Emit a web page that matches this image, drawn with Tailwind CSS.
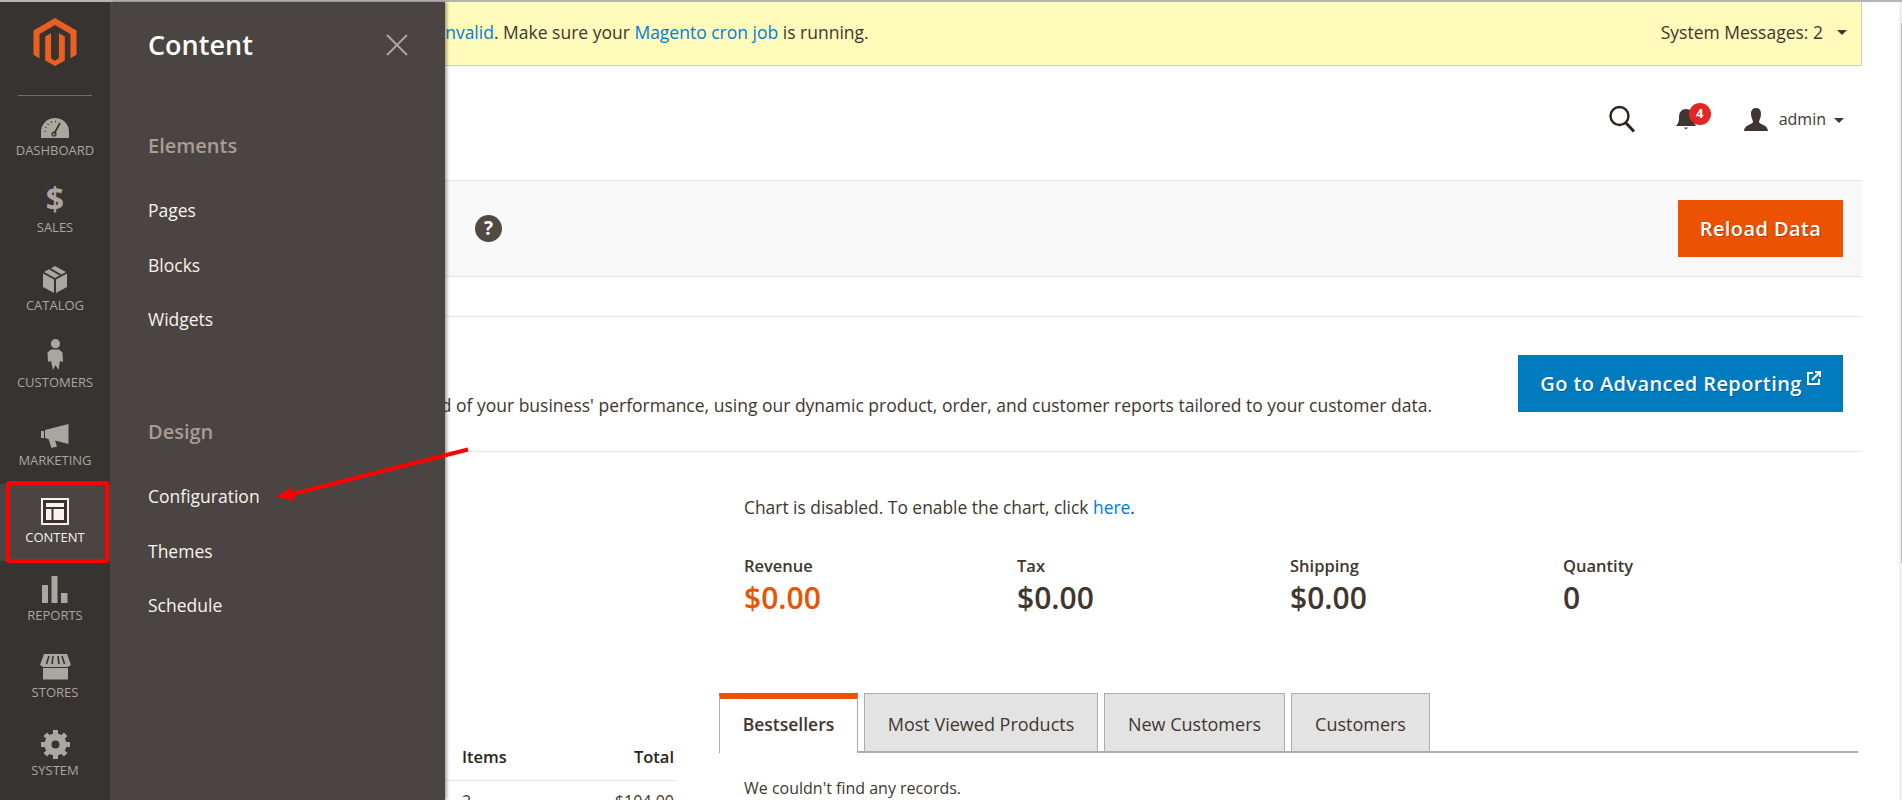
<!DOCTYPE html>
<html lang="en">
<head>
    <meta charset="UTF-8">
    <title>Dashboard / Magento Admin</title>
    <script src="https://cdn.jsdelivr.net/npm/@tailwindcss/browser@4"></script>
</head>
<body class="relative h-screen overflow-hidden bg-white font-['Open_Sans',sans-serif] text-[17.5px] text-[#41362f]">
    <div class="flex h-full border-t-2 border-[#b5b5b5]">

        <!-- icon rail -->
        <nav class="relative z-20 flex h-full w-[110px] shrink-0 flex-col items-center bg-[#373330] text-[13px] uppercase leading-[18px] text-[#aaa6a0]">
            <div class="flex h-[94px] w-full shrink-0 flex-col items-center">
                <svg class="mt-[16px]" width="44" height="49" viewBox="0 0 44 49" fill="#eb5f20">
                    <path d="M22 0 44 12.7V37.4L37.8 41V16.3L22 7.2 6.2 16.3V41L0 37.4V12.7Z"/>
                    <path d="M12 19 18 15.5V41L22 43.5 26 41V15.5L32 19V43.4L22 49 12 43.4Z"/>
                </svg>
                <div class="mt-[29px] h-px w-[74px] bg-[#736d68]"></div>
            </div>
            <a class="flex h-[77.5px] w-full shrink-0 flex-col items-center justify-end pb-[15px]">
                <svg width="28" height="20" viewBox="0 0 28 20"><path fill="#aaa6a0" d="M0 20V14A14 14 0 0 1 28 14V20Z"/><path stroke="#373330" stroke-width="1.6" d="M13 16 19 5"/><circle cx="13" cy="16" r="2" fill="none" stroke="#373330" stroke-width="1.2"/><path stroke="#373330" stroke-width="1.4" stroke-dasharray="1 3" fill="none" d="M4 14A10 10 0 0 1 17 4"/></svg>
                <span class="mt-[3px]">Dashboard</span>
            </a>
            <a class="flex h-[77.5px] w-full shrink-0 flex-col items-center justify-end pb-[15px]">
                <span class="text-[32px] font-bold leading-[38px]">$</span>
                <span>Sales</span>
            </a>
            <a class="flex h-[77.5px] w-full shrink-0 flex-col items-center justify-end pb-[15px]">
                <svg width="24" height="27" viewBox="0 0 24 27" fill="#aaa6a0"><path d="M0 7.5 11 13.5V27L0 21Z"/><path d="M24 7.5 13 13.5V27L24 21Z"/><path d="M12 0 23 6 12 12 1 6Z"/><path stroke="#373330" stroke-width="2" d="M6.5 2.5 17.5 9"/></svg>
                <span class="mt-[3px]">Catalog</span>
            </a>
            <a class="flex h-[77.5px] w-full shrink-0 flex-col items-center justify-end pb-[15px]">
                <svg width="16" height="31" viewBox="0 0 16 31" fill="#aaa6a0"><circle cx="8.5" cy="4.7" r="4.6"/><path d="M4 10.5H12L15.5 13.5 16 23 13 22 11.5 31 8.5 26 6 31 4 22 1 23 .5 13.5Z"/></svg>
                <span class="mt-[3px]">Customers</span>
            </a>
            <a class="flex h-[77.5px] w-full shrink-0 flex-col items-center justify-end pb-[15px]">
                <svg width="28" height="24" viewBox="0 0 28 24" fill="#aaa6a0"><path d="M0 7H3V14H0Z"/><path d="M4 6 27.5 0V20L14 16.5 16 22.5 10.5 24 7.5 15 4 14Z"/></svg>
                <span class="mt-[3px]">Marketing</span>
            </a>
            <a class="flex h-[77.5px] w-full shrink-0 flex-col items-center justify-end bg-[#4a4542] pb-[15px] text-[#f7f3eb]">
                <svg width="28" height="27" viewBox="0 0 28 27"><rect x="1" y="1" width="26" height="25" fill="#373330" stroke="#f7f3eb" stroke-width="2"/><path fill="#f7f3eb" d="M5 5H23V9H5ZM5 11H10.5V22H5ZM12.5 11H23V22H12.5Z"/></svg>
                <span class="mt-[3px]">Content</span>
            </a>
            <a class="flex h-[77.5px] w-full shrink-0 flex-col items-center justify-end pb-[15px]">
                <svg width="26" height="27" viewBox="0 0 26 27" fill="#aaa6a0"><path d="M0 9H6V27H0ZM9.500 0H15.500V27H9.500ZM19 17H25.500V27H19Z"/></svg>
                <span class="mt-[3px]">Reports</span>
            </a>
            <a class="flex h-[77.5px] w-full shrink-0 flex-col items-center justify-end pb-[15px]">
                <svg width="31" height="26" viewBox="0 0 31 26" fill="#aaa6a0"><path d="M4 0H27L31 11 28 13H3L0 11Z"/><path stroke="#373330" stroke-width="1.6" d="M9 2 6.500 10M13 2 12 10M18 2 19 10M22 2 24.500 10"/><path d="M3 14H28V25.500H3Z"/></svg>
                <span class="mt-[3px]">Stores</span>
            </a>
            <a class="flex h-[77.5px] w-full shrink-0 flex-col items-center justify-end pb-[15px]">
                <svg width="29" height="29" viewBox="0 0 29 29"><circle cx="14.500" cy="14.500" r="7.500" fill="none" stroke="#aaa6a0" stroke-width="7"/><path stroke="#aaa6a0" stroke-width="5" d="M14.500 0V5M14.500 24V29M0 14.500H5M24 14.500H29M4.300 4.300 7.800 7.800M21.200 21.200 24.700 24.700M4.300 24.700 7.800 21.200M21.200 7.800 24.700 4.300"/></svg>
                <span class="mt-[2px]">System</span>
            </a>
        </nav>

        <!-- page -->
        <main class="flex w-[1752px] shrink-0 flex-col">
            <div class="flex h-[64px] shrink-0 items-center border-b border-r border-[#cccccc] bg-[#fffbbb] pb-[2px] pr-[14px]">
                <p class="flex-1 whitespace-nowrap pr-[792px] text-right"><a class="text-[#007bdb]">indexers are invalid</a>. Make sure your <a class="text-[#007bdb]">Magento cron job</a> is running.</p>
                <span>System Messages: 2</span>
                <span class="ml-[14px] h-0 w-0 border-x-[5px] border-t-[5px] border-x-transparent border-t-[#41362f]"></span>
            </div>

            <header class="flex h-[114px] shrink-0 items-center justify-end pb-[8px] pr-[18px]">
                <svg width="28" height="28" viewBox="0 0 28 28" fill="none" stroke="#2c2420" stroke-width="2.400"><circle cx="11.500" cy="11" r="9"/><path stroke-width="3" d="M18 18 26 26.500"/></svg>
                <div class="relative ml-[40px] h-[22px] w-[22px]">
                    <svg width="22" height="22" viewBox="0 0 22 22" fill="#41362f"><path d="M0 18C3 15 3 12 3 9 3 4 6 1 10 1S17 4 17 9C17 12 18 15 20 18ZM8 19.500H12L10 21.500Z"/></svg>
                    <span class="absolute left-[13px] top-[-5px] flex h-[22px] w-[22px] items-center justify-center rounded-full bg-[#e22626] text-[13px] font-bold text-white">4</span>
                </div>
                <svg class="ml-[46px]" width="24" height="23" viewBox="0 0 24 23" fill="#41362f"><path d="M12 0C16 0 17 3 17 6 17 10 15 12 15 14 15 16 24 17 24 23H0C0 17 9 16 9 14 9 12 7 10 7 6 7 3 8 0 12 0Z"/></svg>
                <span class="ml-[11px] text-[16px]">admin</span>
                <span class="ml-[8px] mt-[2px] h-0 w-0 border-x-[5px] border-t-[5px] border-x-transparent border-t-[#41362f]"></span>
            </header>

            <div class="flex h-[97px] shrink-0 items-center justify-between border-y border-[#e3e3e3] bg-[#f8f8f8] pl-[365px] pr-[19px]">
                <span class="flex h-[27px] w-[27px] items-center justify-center rounded-full bg-[#514943] text-[19px] font-bold text-white">?</span>
                <button class="h-[57px] w-[165px] bg-[#eb5202] text-[20px] font-semibold tracking-[0.4px] text-white [text-shadow:1px_1px_0_rgba(0,0,0,0.25)]">Reload Data</button>
            </div>

            <section class="mt-[39px] flex h-[136px] shrink-0 items-start border-y border-[#e3e3e3] pr-[19px] pt-[38px]">
                <p class="mt-[37px] flex-1 whitespace-nowrap pr-[86px] text-right">Gain new insights and take command of your business' performance, using our dynamic product, order, and customer reports tailored to your customer data.</p>
                <button class="flex h-[57px] w-[325px] items-start justify-center bg-[#007bc0] pt-[14px] text-[20px] font-semibold tracking-[0.4px] text-white [text-shadow:1px_1px_0_rgba(0,0,0,0.25)]">
                    Go to Advanced Reporting
                    <svg class="ml-[5px] mt-[2px]" width="14" height="14" viewBox="0 0 14 14" fill="none" stroke="#ffffff" stroke-width="2"><path d="M6 2H1V13H12V8"/><path d="M5 9 12 2M8 1H13V6"/></svg>
                </button>
            </section>

            <div class="flex flex-1 pl-[30px]">
                <div class="w-[535px] shrink-0 pt-[284px]">
                    <div class="flex h-[45px] items-center border-b border-[#e3e3e3] pb-[1px] pr-[1px] text-[#2c2420]">
                        <span class="ml-[322px] text-[16.5px] font-semibold">Items</span>
                        <span class="ml-auto text-[16.5px] font-semibold">Total</span>
                    </div>
                    <div class="flex pr-[1px] pt-[8px] text-[16px]">
                        <span class="ml-[322px]">2</span>
                        <span class="ml-auto">$104.00</span>
                    </div>
                </div>

                <div class="ml-[44px] flex-1 pr-[4px]">
                    <p class="ml-[25px] mt-[44px] text-[17.4px] leading-[22px]">Chart is disabled. To enable the chart, click <a class="text-[#007bdb]">here</a>.</p>
                    <div class="ml-[25px] mt-[38px] grid grid-cols-[273px_273px_273px_273px] text-[#41362f]">
                        <div><p class="text-[16.5px] font-semibold leading-[20px]">Revenue</p><p class="mt-[2px] text-[30px] font-semibold leading-[40px] text-[#eb5202]">$0.00</p></div>
                        <div><p class="text-[16.5px] font-semibold leading-[20px]">Tax</p><p class="mt-[2px] text-[30px] font-semibold leading-[40px]">$0.00</p></div>
                        <div><p class="text-[16.5px] font-semibold leading-[20px]">Shipping</p><p class="mt-[2px] text-[30px] font-semibold leading-[40px]">$0.00</p></div>
                        <div><p class="text-[16.5px] font-semibold leading-[20px]">Quantity</p><p class="mt-[2px] text-[30px] font-semibold leading-[40px]">0</p></div>
                    </div>
                    <div class="mt-[75px] flex h-[60px] gap-[6px] border-b-2 border-[#adadad] text-[18px]">
                        <span class="flex h-[60px] w-[139px] items-center justify-center border-x border-t-[6px] border-x-[#adadad] border-t-[#eb5202] bg-white pb-[4px] text-[17.5px] font-semibold">Bestsellers</span>
                        <span class="flex h-[59px] w-[234px] items-center justify-center border border-[#adadad] bg-[#e3e3e3] pt-[3px]">Most Viewed Products</span>
                        <span class="flex h-[59px] w-[181px] items-center justify-center border border-[#adadad] bg-[#e3e3e3] pt-[3px]">New Customers</span>
                        <span class="flex h-[59px] w-[139px] items-center justify-center border border-[#adadad] bg-[#e3e3e3] pt-[3px]">Customers</span>
                    </div>
                    <p class="ml-[25px] mt-[24px] text-[16px] leading-[22px]">We couldn't find any records.</p>
                </div>
            </div>
        </main>

        <div class="flex-1"></div>
        <div class="flex w-[3px] shrink-0 justify-end bg-[#f0f0f0] pt-[21px]">
            <div class="h-[540px] w-px bg-[#c1c1c1]"></div>
        </div>
    </div>

    <!-- content fly-out, lies over the page -->
    <aside class="absolute bottom-0 left-[110px] top-[2px] z-10 w-[335px] bg-[#4a4542] pl-[38px] text-[17.5px] text-[#f7f3eb] shadow-[2px_0_3px_rgba(0,0,0,0.35)]">
        <div class="flex h-[86px] items-center justify-between pr-[37px]">
            <h2 class="text-[27px] font-semibold text-white">Content</h2>
            <svg width="22" height="22" viewBox="0 0 22 22" stroke="#ada59c" stroke-width="2"><path d="M1 1 21 21M21 1 1 21"/></svg>
        </div>
        <h3 class="mt-[44px] text-[20px] font-semibold leading-[28px] text-[#a79d95]">Elements</h3>
        <ul class="mt-[38px] flex flex-col gap-[30.5px] leading-[24px]">
            <li>Pages</li>
            <li>Blocks</li>
            <li>Widgets</li>
        </ul>
        <h3 class="mt-[87px] text-[20px] font-semibold leading-[28px] text-[#a79d95]">Design</h3>
        <ul class="mt-[38px] flex flex-col gap-[30.5px] leading-[24px]">
            <li>Configuration</li>
            <li>Themes</li>
            <li>Schedule</li>
        </ul>
    </aside>

    <!-- annotation marks from the screenshot -->
    <div class="absolute left-[6px] top-[481px] z-30 h-[82px] w-[103px] rounded-[2px] border-[4px] border-[#ff0000]"></div>
    <svg class="absolute left-0 top-0 z-30" width="500" height="520" viewBox="0 0 500 520" fill="#ff0000">
        <path d="M467.500 447.500 468.500 451.500 293 496 296 501 276 497 292 487 292 492Z"/>
    </svg>
</body>
</html>
